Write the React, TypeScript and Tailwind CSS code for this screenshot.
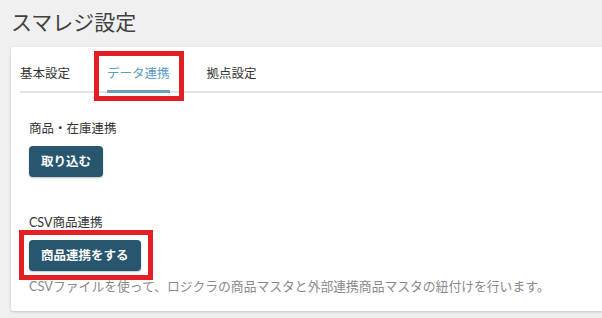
const font = { fontFamily: 'Lato, "Noto Sans CJK JP", sans-serif' }

const Highlight = ({ className }: { className: string }) => (
  <div className={`pointer-events-none absolute border-[5px] border-[#e31e24] ${className}`} />
)

const tabs = ['基本設定', 'データ連携', '拠点設定']

export default function App() {
  return (
    <div className="h-[318px] w-[602px] overflow-hidden bg-[#f0f0f0] pl-[11px]" style={font}>
      <h1 className="pt-[7px] text-[21px] leading-[30px] text-[#404040]">スマレジ設定</h1>

      <div className="mt-[10px] w-[620px] rounded-[3px] bg-white pl-[9px] pt-[18px] pb-[16px] shadow-[0_1px_3px_rgba(0,0,0,0.18)]">
        {/* Tabs */}
        <div className="flex gap-[37px] border-b-2 border-[#e4e4e4]">
          {tabs.map((tab) =>
            tab === 'データ連携' ? (
              <div key={tab} className="relative pb-2 text-[12.5px] leading-[18px] text-[#5b9cc8]">
                {tab}
                <span className="absolute -bottom-[2px] left-0 h-[3px] w-full bg-[#6aa0c6]" />
                <Highlight className="-left-[13px] -right-[14px] -top-[14px] -bottom-[10px]" />
              </div>
            ) : (
              <div key={tab} className="pb-2 text-[12.5px] leading-[18px] text-[#333]">
                {tab}
              </div>
            )
          )}
        </div>

        <div className="pl-[9px]">
          {/* 商品・在庫連携 */}
          <div className="mt-[27px]">
            <p className="text-[12.5px] leading-[18px] text-[#333]">商品・在庫連携</p>
            <button className="mt-2 flex h-[31px] items-center rounded-[4px] bg-[#29566f] px-3 text-[12.5px] font-bold leading-[18px] text-white shadow-[0_1px_2px_rgba(0,0,0,0.25)]">
              取り込む
            </button>
          </div>

          {/* CSV商品連携 */}
          <div className="mt-[37px]">
            <p className="text-[12.5px] leading-[18px] text-[#333]">CSV商品連携</p>
            <div className="relative mt-2 w-fit">
              <button className="flex h-[31px] items-center rounded-[4px] bg-[#29566f] px-3 text-[12.5px] font-bold leading-[18px] text-white shadow-[0_1px_2px_rgba(0,0,0,0.25)]">
                商品連携をする
              </button>
              <Highlight className="-left-[10px] -right-[12px] -top-[10px] -bottom-[9px] z-10" />
            </div>
            <p className="mt-[6px] text-[12.8px] leading-[18px] text-[#8a8a8a]">
              CSVファイルを使って、ロジクラの商品マスタと外部連携商品マスタの紐付けを行います。
            </p>
          </div>
        </div>
      </div>
    </div>
  )
}
